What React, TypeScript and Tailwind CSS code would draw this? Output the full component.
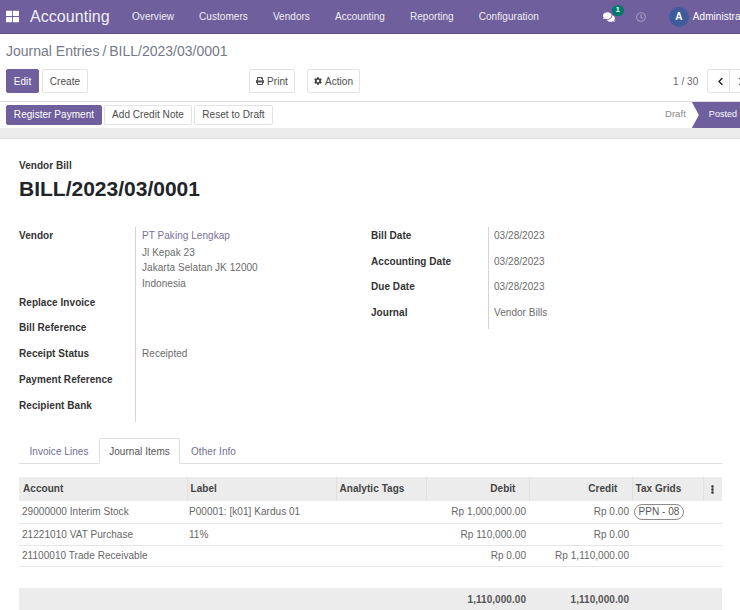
import { FaComments, FaPrint, FaCog, FaRegClock, FaChevronLeft, FaChevronRight, FaEllipsisV, FaThLarge } from "react-icons/fa";

const navItems = ["Overview", "Customers", "Vendors", "Accounting", "Reporting", "Configuration"];

const leftFields = [
  { label: "Replace Invoice", value: "", h: "h-[25px]" },
  { label: "Bill Reference", value: "", h: "h-[26px]" },
  { label: "Receipt Status", value: "Receipted", h: "h-[26px]" },
  { label: "Payment Reference", value: "", h: "h-[26px]" },
  { label: "Recipient Bank", value: "", h: "h-[26px]" },
];

const rightFields = [
  { label: "Bill Date", value: "03/28/2023" },
  { label: "Accounting Date", value: "03/28/2023" },
  { label: "Due Date", value: "03/28/2023" },
  { label: "Journal", value: "Vendor Bills" },
];

const rows = [
  { account: "29000000 Interim Stock", label: "P00001: [k01] Kardus 01", debit: "Rp 1,000,000.00", credit: "Rp 0.00", tax: "PPN - 08", h: "h-[22px]" },
  { account: "21221010 VAT Purchase", label: "11%", debit: "Rp 110,000.00", credit: "Rp 0.00", tax: "", h: "h-[22px]" },
  { account: "21100010 Trade Receivable", label: "", debit: "Rp 0.00", credit: "Rp 1,110,000.00", tax: "", h: "h-[21px]" },
];

function Btn({ children, primary, className = "" }: { children: React.ReactNode; primary?: boolean; className?: string }) {
  return (
    <button
      className={`flex shrink-0 items-center justify-center gap-[3px] rounded-[2px] border text-[10px] ${
        primary ? "border-[#6f5f9c] bg-[#6f5f9c] text-white" : "border-[#e3e3e3] bg-white text-[#4c4c4c]"
      } ${className}`}
    >
      {children}
    </button>
  );
}

export default function App() {
  return (
    <div className="h-[610px] w-[740px] overflow-hidden bg-white font-['Liberation_Sans',Arial,sans-serif] text-[10px] tracking-[0.05px] text-[#6b6b6b]">
      {/* Navbar */}
      <header className="flex h-[34px] items-center border-b border-[#5e5088] bg-[#6f5f9c] text-white">
        <FaThLarge className="ml-[6px] h-[13px] w-[13px] shrink-0 text-white" />
        <span className="ml-[11px] w-[102px] shrink-0 text-[16px] leading-none text-[#f0eef6]">Accounting</span>
        <nav className="flex shrink-0 gap-[25px] text-[10px] text-[#efedf5]">
          {navItems.map((item) => (
            <span key={item} className="whitespace-nowrap">{item}</span>
          ))}
        </nav>
        <div className="relative ml-[64px] h-[12px] w-[12px] shrink-0">
          <FaComments className="h-[12px] w-[12px] text-white" />
          <span className="absolute left-[9px] top-[-6px] flex h-[11px] w-[12px] items-center justify-center rounded-full bg-[#00796b] text-[8px] font-bold text-white">1</span>
        </div>
        <FaRegClock className="ml-[21px] h-[10px] w-[10px] shrink-0 text-[#a99ec6]" />
        <span className="ml-[23px] flex h-[20px] w-[20px] shrink-0 items-center justify-center rounded-full bg-[#3f5b9c] text-[10px] font-bold">A</span>
        <span className="ml-[4px] whitespace-nowrap text-[10px]">Administrator</span>
      </header>

      {/* Control panel */}
      <div className="h-[68px] border-b border-[#dcdcdc] px-[6px] pt-[8px]">
        <div className="flex h-[17px] items-center text-[14px] leading-none tracking-normal text-[#747a88]">
          Journal Entries<span className="mx-[3px]">/</span>BILL/2023/03/0001
        </div>
        <div className="mt-[10px] flex h-[24px] items-center">
          <Btn primary className="h-[24px] w-[33px]">Edit</Btn>
          <Btn className="ml-[3px] h-[24px] w-[46px]">Create</Btn>
          <Btn className="ml-[161px] h-[24px] w-[46px]">
            <FaPrint className="h-[8px] w-[8px]" /> Print
          </Btn>
          <Btn className="ml-[12px] h-[24px] w-[53px]">
            <FaCog className="h-[8px] w-[8px] text-[#444]" /> Action
          </Btn>
          <span className="ml-[313px] shrink-0 whitespace-nowrap text-[10px] text-[#666]">1 / 30</span>
          <div className="ml-[9px] flex h-[24px] w-[44px] shrink-0 rounded-[2px] border border-[#e3e3e3]">
            <span className="flex w-[22px] shrink-0 items-center justify-center border-r border-[#e3e3e3] pl-[3px]">
              <FaChevronLeft className="h-[9px] w-[9px] text-[#222]" />
            </span>
            <span className="flex shrink-0 items-center pl-[7px]">
              <FaChevronRight className="h-[9px] w-[9px] text-[#222]" />
            </span>
          </div>
        </div>
      </div>

      {/* Status bar */}
      <div className="flex h-[26px] items-center pl-[6px]">
        <Btn primary className="h-[20px] w-[96px] pb-[1px]">Register Payment</Btn>
        <Btn className="ml-[2px] h-[20px] w-[88px] pb-[1px]">Add Credit Note</Btn>
        <Btn className="ml-[2px] h-[20px] w-[79px] pb-[1px]">Reset to Draft</Btn>
        <span className="ml-[392px] shrink-0 pb-[1px] text-[9.5px] text-[#8a8a8a]">Draft</span>
        <div className="ml-[6px] flex h-[26px] w-[52px] shrink-0 items-center bg-[#6f5f9c] pb-[1px] pl-[17px] text-[9px] text-white [clip-path:polygon(0_0,100%_0,100%_100%,0_100%,7px_50%)]">
          Posted
        </div>
      </div>

      {/* Band between status bar and sheet */}
      <div className="h-[11px] border-b border-[#dcdcdc] bg-[#ececec]" />

      {/* Sheet */}
      <main className="px-[19px] pt-[21px]">
        <div className="text-[10px] font-bold leading-[12px] text-[#333]">Vendor Bill</div>
        <h1 className="mt-[4px] text-[21px] font-bold leading-[26px] tracking-normal text-[#212529]">BILL/2023/03/0001</h1>

        <div className="mt-[25px] flex h-[195px]">
          {/* Left group */}
          <div className="w-[352px] shrink-0">
            <div className="flex h-[62px]">
              <div className="w-[116px] shrink-0 pt-[3px] font-bold leading-[12px] text-[#333]">Vendor</div>
              <div className="h-full border-l border-[#d5d5d5] pl-[6px] pt-[1px] leading-[15.5px]">
                <div className="mb-[1px] text-[#7a6e9e]">PT Paking Lengkap</div>
                <div>Jl Kepak 23</div>
                <div>Jakarta Selatan JK 12000</div>
                <div>Indonesia</div>
              </div>
            </div>
            <div className="h-[133px] w-[117px] border-r border-[#d5d5d5] pt-[6px]">
              {leftFields.map((f) => (
                <div key={f.label} className={`flex ${f.h} w-[352px]`}>
                  <span className="w-[123px] shrink-0 whitespace-nowrap font-bold text-[#333]">{f.label}</span>
                  <span>{f.value}</span>
                </div>
              ))}
            </div>
          </div>

          {/* Right group */}
          <div className="h-[103px]">
            {rightFields.map((f) => (
              <div key={f.label} className="flex h-[25.5px]">
                <span className="w-[117px] shrink-0 whitespace-nowrap pt-[1px] font-bold text-[#333]">{f.label}</span>
                <span className="h-[25.5px] border-l border-[#d5d5d5] pl-[5px] pt-[1px]">{f.value}</span>
              </div>
            ))}
          </div>
        </div>

        {/* Tabs */}
        <div className="mt-[16px] flex h-[26px] w-[703px] border-b border-[#dedede] text-[10px]">
          <span className="flex h-[25px] w-[80px] shrink-0 items-center justify-center pt-[1px] text-[#6f6f8f]">Invoice Lines</span>
          <span className="flex h-[26px] w-[81px] shrink-0 items-center justify-center rounded-t-[2px] border border-[#dedede] border-b-white bg-white pt-[1px] text-[#555]">Journal Items</span>
          <span className="flex h-[25px] w-[67px] shrink-0 items-center justify-center pt-[1px] text-[#6f6f8f]">Other Info</span>
        </div>

        {/* Journal items */}
        <table className="mt-[13px] w-[703px] table-fixed border-collapse">
          <colgroup>
            <col className="w-[168px]" />
            <col className="w-[149px]" />
            <col className="w-[90px]" />
            <col className="w-[103px]" />
            <col className="w-[103px]" />
            <col className="w-[71px]" />
            <col className="w-[19px]" />
          </colgroup>
          <thead>
            <tr className="h-[24px] bg-[#ececec] font-bold text-[#444]">
              <th className="border-r border-[#e0e0e0] pb-[2px] pl-[4px] text-left">Account</th>
              <th className="border-r border-[#e0e0e0] pb-[2px] pl-[3px] text-left">Label</th>
              <th className="border-r border-[#e0e0e0] pb-[2px] pl-[3px] text-left">Analytic Tags</th>
              <th className="border-r border-[#e0e0e0] pb-[2px] pr-[13px] text-right">Debit</th>
              <th className="border-r border-[#e0e0e0] pb-[2px] pr-[14px] text-right">Credit</th>
              <th className="border-r border-[#e0e0e0] pb-[2px] pl-[3px] text-left">Tax Grids</th>
              <th>
                <FaEllipsisV className="mx-auto h-[9px] w-[9px] text-[#333]" />
              </th>
            </tr>
          </thead>
          <tbody>
            {rows.map((r) => (
              <tr key={r.account} className={`${r.h} border-b border-[#e6e6e6] text-[#666]`}>
                <td className="whitespace-nowrap pl-[3px]">{r.account}</td>
                <td className="whitespace-nowrap pl-[2px]">{r.label}</td>
                <td />
                <td className="whitespace-nowrap pr-[3px] text-right">{r.debit}</td>
                <td className="whitespace-nowrap pr-[3px] text-right">{r.credit}</td>
                <td className="pl-[2px]">
                  {r.tax && (
                    <span className="flex h-[16px] w-[50px] items-center justify-center whitespace-nowrap rounded-full border border-[#8a8a8a] text-[10px] text-[#555]">
                      {r.tax}
                    </span>
                  )}
                </td>
                <td />
              </tr>
            ))}
            <tr className="h-[22px]">
              <td colSpan={7} />
            </tr>
          </tbody>
          <tfoot>
            <tr className="h-[22px] bg-[#ececec] font-bold text-[#555]">
              <td />
              <td />
              <td />
              <td className="pr-[3px] text-right">1,110,000.00</td>
              <td className="pr-[3px] text-right">1,110,000.00</td>
              <td />
              <td />
            </tr>
          </tfoot>
        </table>
      </main>
    </div>
  );
}
